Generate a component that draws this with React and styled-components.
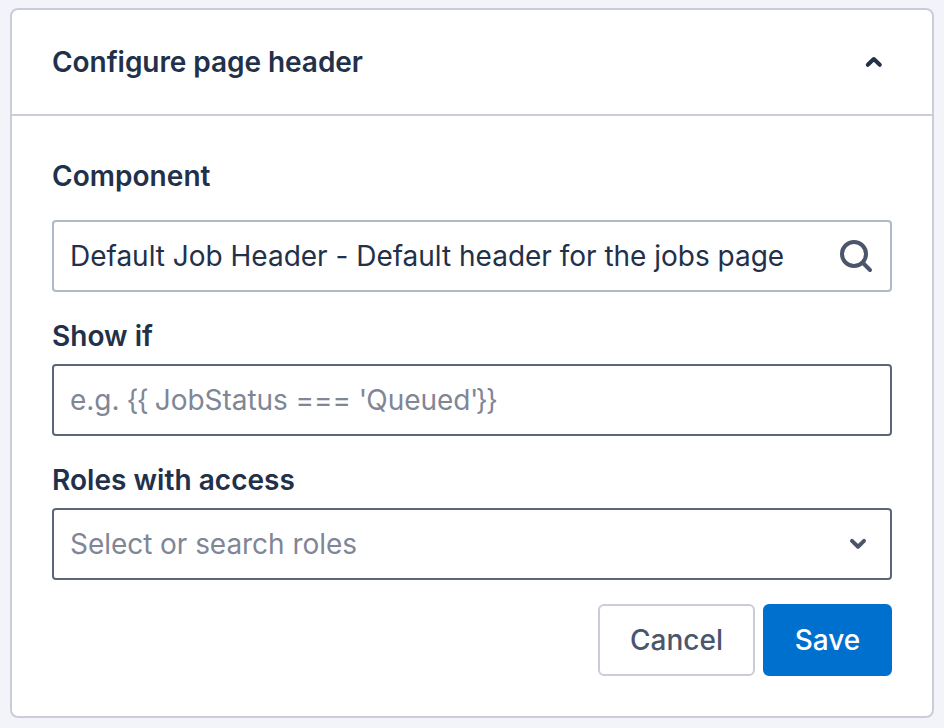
import React from "react";
import styled, { createGlobalStyle } from "styled-components";

const GlobalStyle = createGlobalStyle`
  * { box-sizing: border-box; }
  body { margin: 0; background: #f3f4f9; font-family: Inter, "Liberation Sans", sans-serif; color: #22304a; }
`;

const Page = styled.main`
  height: 728px;
  padding: 8px 10px 10px;
`;

const Card = styled.section`
  height: 710px;
  background: #fff;
  border: 2px solid #caccda;
  border-radius: 8px;
`;

const CardHeader = styled.header`
  display: flex;
  align-items: center;
  justify-content: space-between;
  height: 106px;
  padding: 0 48px 0 40px;
  border-bottom: 2px solid #caccda;
`;

const Title = styled.h1`
  margin: 0;
  font-size: 28px;
  line-height: 40px;
  font-weight: 600;
  letter-spacing: -0.06px;
`;

const Form = styled.form`
  display: flex;
  flex-direction: column;
  padding: 40px 40px 0;
`;

const Label = styled.label`
  height: ${(p) => (p.$spacious ? 64 : 48)}px;
  font-size: 28px;
  line-height: 40px;
  font-weight: 600;
  letter-spacing: 0.04px;
`;

const Field = styled.div`
  display: flex;
  align-items: center;
  height: 72px;
  margin-bottom: ${(p) => p.$gap}px;
  padding: 0 ${(p) => p.$right}px 0 16px;
  border: 2px solid ${(p) => p.$line};
  border-radius: 4px;
`;

const FieldText = styled.div`
  flex: 1;
  min-width: 0;
  white-space: pre;
  font-size: 28px;
  line-height: 40px;
  font-weight: 400;
  letter-spacing: ${(p) => (p.$muted ? -0.05 : -0.015)}px;
  color: ${(p) => (p.$muted ? "#7f8696" : "#22304a")};
`;

const Tight = styled.span`
  letter-spacing: ${(p) => p.$by}px;
`;

const Actions = styled.div`
  display: flex;
  justify-content: flex-end;
  gap: 8px;
`;

const Button = styled.button`
  width: ${(p) => p.$width}px;
  height: 72px;
  padding: 0;
  border: 2px solid ${(p) => (p.$primary ? "#0070cf" : "#caccda")};
  border-radius: 6px;
  background: ${(p) => (p.$primary ? "#0070cf" : "#fff")};
  color: ${(p) => (p.$primary ? "#fff" : "#4b566c")};
  font: 500 28px/40px Inter, "Liberation Sans", sans-serif;
`;

const Icon = styled.svg`
  display: block;
  flex: none;
  fill: none;
  stroke: ${(p) => p.$color};
  stroke-linecap: round;
  stroke-linejoin: round;
`;

export default function App() {
  return (
    <Page>
      <GlobalStyle />
      <Card>
        <CardHeader>
          <Title>Configure page header</Title>
          <Icon $color="#22304a" width="20" height="20" viewBox="0 0 20 20" strokeWidth="4">
            <path d="M3.8 12.8L9.8 7l6 5.8" />
          </Icon>
        </CardHeader>
        <Form onSubmit={(e) => e.preventDefault()}>
          <Label as="div" $spacious>Component</Label>
          <Field $line="#b0b8c6" $gap={24} $right={16}>
            <FieldText>Default Job Header - Default header for the jobs page</FieldText>
            <Icon $color="#4b566c" width="36" height="36" viewBox="0 0 36 36" strokeWidth="4">
              <circle cx="16" cy="16" r="12" />
              <path d="M25 25l7 7" />
            </Icon>
          </Field>
          <Label as="div">Show if</Label>
          <Field $line="#5d6578" $gap={24} $right={16}>
            <FieldText $muted>
              e.g.<Tight $by={-0.8}> </Tight><Tight $by={-1.7}>{"{{"}</Tight>{" JobStatus === "}<Tight $by={-0.9}>'</Tight>Queue<Tight $by={-0.5}>d</Tight><Tight $by={-2.6}>'</Tight><Tight $by={-1.8}>{"}}"}</Tight>
            </FieldText>
          </Field>
          <Label as="div">Roles with access</Label>
          <Field $line="#5d6578" $gap={24} $right={22}>
            <FieldText $muted>Select or search roles</FieldText>
            <Icon $color="#4b566c" width="20" height="20" viewBox="0 0 20 20" strokeWidth="4">
              <path d="M4 6.9l6 5.8 6-5.8" />
            </Icon>
          </Field>
          <Actions>
            <Button type="button" $width={157}>Cancel</Button>
            <Button type="submit" $primary $width={129}>Save</Button>
          </Actions>
        </Form>
      </Card>
    </Page>
  );
}
